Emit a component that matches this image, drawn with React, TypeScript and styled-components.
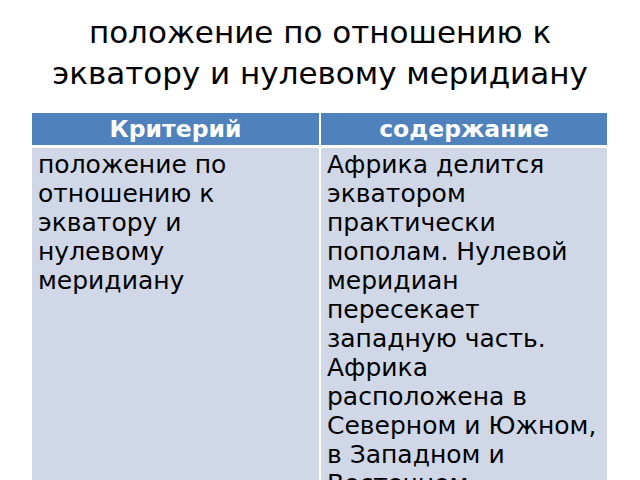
import React from "react";
import styled, { createGlobalStyle } from "styled-components";

const Global = createGlobalStyle`
  html, body { margin: 0; padding: 0; background: #ffffff; }
  body { font-family: "DejaVu Sans", Verdana, sans-serif; }
`;

const Slide = styled.div`
  width: 640px;
  height: 480px;
  overflow: hidden;
  background: #ffffff;
  display: flex;
  flex-direction: column;
`;

const Title = styled.h1`
  margin: 12px 0 0;
  font-family: "DejaVu Sans", Verdana, sans-serif;
  font-weight: normal;
  font-size: 31px;
  line-height: 41px;
  color: #000000;
  text-align: center;
`;

const Table = styled.div`
  margin: 19px 0 0 32px;
  display: grid;
  grid-template-columns: 287px 286px;
  column-gap: 2px;
  row-gap: 3px;
`;

const HeadCell = styled.div`
  background: #4f81bd;
  color: #ffffff;
  font-weight: bold;
  font-size: 23.5px;
  line-height: 32px;
  height: 32px;
  text-align: center;
`;

const BodyCell = styled.div`
  background: #d0d8e8;
  color: #000000;
  font-size: 25px;
  line-height: 29px;
  padding: 2px 6px 0 6px;
  min-height: 400px;
`;

export default function App() {
  return (
    <>
      <Global />
      <Slide>
        <Title>
          положение по отношению к<br />
          экватору и нулевому меридиану
        </Title>
        <Table>
          <HeadCell>Критерий</HeadCell>
          <HeadCell>содержание</HeadCell>
          <BodyCell>положение по отношению к экватору и нулевому меридиану</BodyCell>
          <BodyCell>
            Африка делится экватором практически пополам. Нулевой меридиан
            пересекает западную часть. Африка расположена в Северном и Южном,
            в Западном и Восточном полушариях.
          </BodyCell>
        </Table>
      </Slide>
    </>
  );
}
